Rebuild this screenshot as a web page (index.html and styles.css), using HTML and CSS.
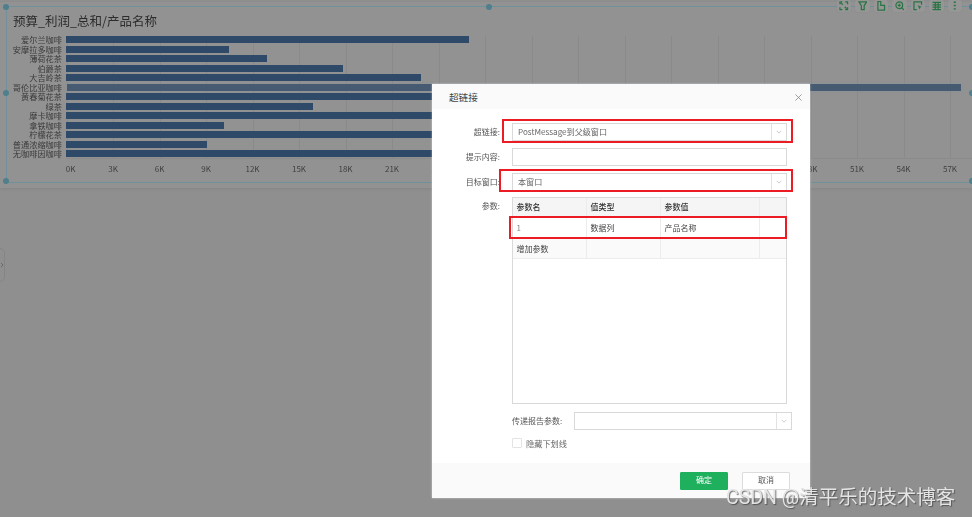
FILE: index.html
```html
<!DOCTYPE html>
<html lang="zh">
<head>
<meta charset="utf-8">
<title>超链接</title>
<link rel="stylesheet" href="styles.css">
</head>
<body>
<main class="canvas">
  <section class="chart">
    <span class="handle h-tl"></span><span class="handle h-tc"></span><span class="handle h-tr"></span>
    <span class="handle h-ml"></span><span class="handle h-mr"></span>
    <span class="handle h-bl"></span><span class="handle h-bc"></span><span class="handle h-br"></span>
    <div class="toolbar">
      <span class="tool"><svg viewBox="0 0 10 10"><path d="M1 3.500V1h2.500M6.500 1H9v2.500M1 6.500V9h2.500M9 6.500V9H6.500M2 2l2 2M8 8 6 6"/></svg></span>
      <span class="tool"><svg viewBox="0 0 10 10"><path d="M1 1h8L6.500 5v4h-3V5z"/></svg></span>
      <span class="tool"><svg viewBox="0 0 10 10"><path d="M2 .5h3v4h4v5H2z"/></svg></span>
      <span class="tool"><svg viewBox="0 0 10 10"><circle cx="4.500" cy="4.500" r="3.500"/><path d="M7 7l2.500 2.500M3 4.500h3M4.500 3v3"/></svg></span>
      <span class="tool"><svg viewBox="0 0 10 10"><path d="M9 4V1H1v8h3"/><path class="solid" d="M5 4.500l4 1.500-1.500 1L7 9z"/></svg></span>
      <span class="tool"><svg viewBox="0 0 10 10"><path d="M0.500 1.500h9M0.500 4h9M0.500 6.500h9M0.500 9h9M3.500 1v8M6.500 1v8"/></svg></span>
      <span class="tool"><svg viewBox="0 0 10 10"><path class="dots" d="M5 .5v1.500M5 4v1.500M5 7.500V9"/></svg></span>
    </div>
    <h1 class="chart-title">预算_利润_总和/产品名称</h1>
    <div class="plot">
      <div class="grid-lines">
        <i></i><i></i><i></i><i></i><i></i><i></i><i></i><i></i><i></i><i></i>
        <i></i><i></i><i></i><i></i><i></i><i></i><i></i><i></i><i></i><i></i>
      </div>
      <div class="rows">
        <div class="row"><span class="cat">爱尔兰咖啡</span><span class="bar" style="width:403px"></span></div>
        <div class="row"><span class="cat">安摩拉多咖啡</span><span class="bar" style="width:163px"></span></div>
        <div class="row"><span class="cat">薄荷花茶</span><span class="bar" style="width:201px"></span></div>
        <div class="row"><span class="cat">伯爵茶</span><span class="bar" style="width:277px"></span></div>
        <div class="row"><span class="cat">大吉岭茶</span><span class="bar" style="width:355px"></span></div>
        <div class="row"><span class="cat">哥伦比亚咖啡</span><span class="bar bar-hl" style="width:894px"></span></div>
        <div class="row"><span class="cat">黄春菊花茶</span><span class="bar" style="width:520px"></span></div>
        <div class="row"><span class="cat">绿茶</span><span class="bar" style="width:247px"></span></div>
        <div class="row"><span class="cat">摩卡咖啡</span><span class="bar" style="width:500px"></span></div>
        <div class="row"><span class="cat">拿铁咖啡</span><span class="bar" style="width:158px"></span></div>
        <div class="row"><span class="cat">柠檬花茶</span><span class="bar" style="width:480px"></span></div>
        <div class="row"><span class="cat">普通浓缩咖啡</span><span class="bar" style="width:141px"></span></div>
        <div class="row"><span class="cat">无咖啡因咖啡</span><span class="bar" style="width:560px"></span></div>
      </div>
      <div class="axis">
        <span class="first">0K</span><span>3K</span><span>6K</span><span>9K</span><span>12K</span><span>15K</span><span>18K</span><span>21K</span><span>24K</span><span>27K</span><span>30K</span><span>33K</span><span>36K</span><span>39K</span><span>42K</span><span>45K</span><span>48K</span><span>51K</span><span>54K</span><span>57K</span>
      </div>
    </div>
  </section>
  <button class="side-tab" type="button" aria-label="展开">
    <svg viewBox="0 0 6 8"><path d="M1.500 1l3 3-3 3"/></svg>
  </button>
  <div class="modal" role="dialog">
    <header class="modal-head">
      <h2>超链接</h2>
      <svg class="close" viewBox="0 0 8 8"><path d="M.5.5l7 7M7.500.500l-7 7"/></svg>
    </header>
    <div class="modal-body">
      <div class="field">
        <label>超链接:</label>
        <div class="select"><span class="value">PostMessage到父级窗口</span><span class="arrow"><svg viewBox="0 0 8 5"><path d="M1 1l3 3 3-3"/></svg></span></div>
      </div>
      <div class="field">
        <label>提示内容:</label>
        <div class="input"></div>
      </div>
      <div class="field field-target">
        <label>目标窗口:</label>
        <div class="select"><span class="value">本窗口</span><span class="arrow"><svg viewBox="0 0 8 5"><path d="M1 1l3 3 3-3"/></svg></span></div>
      </div>
      <div class="field field-table">
        <label>参数:</label>
        <div class="table">
          <div class="t-row t-head"><span>参数名</span><span>值类型</span><span>参数值</span><span></span></div>
          <div class="t-row t-data"><span class="muted">1</span><span>数据列</span><span>产品名称</span><span></span></div>
          <div class="t-row t-add"><span>增加参数</span><span></span><span></span><span></span></div>
        </div>
      </div>
      <div class="pass">
        <label>传递报告参数:</label>
        <div class="select"><span class="value"></span><span class="arrow"><svg viewBox="0 0 8 5"><path d="M1 1l3 3 3-3"/></svg></span></div>
      </div>
      <div class="check"><span class="box"></span><span>隐藏下划线</span></div>
    </div>
    <footer class="modal-foot">
      <button class="btn btn-ok" type="button">确定</button>
      <button class="btn" type="button">取消</button>
    </footer>
    <span class="mark m1"></span><span class="mark m2"></span><span class="mark m3"></span>
  </div>
  <div class="watermark">CSDN @清平乐的技术博客</div>
</main>
</body>
</html>
```

FILE: styles.css
```css
* { box-sizing: border-box; }
html, body { margin: 0; height: 100%; }
body {
  width: 972px; height: 517px; overflow: hidden;
  background: #8f8f8f;
  font-family: "Noto Sans CJK SC", "Noto Sans", sans-serif;
  color: #333;
}
.canvas { position: relative; width: 972px; height: 517px; overflow: hidden; padding-top: 2px; background: #8f8f8f; }

.chart {
  position: relative;
  height: 186px;
  background: #929292;
  box-shadow: 0 1px 3px rgba(0,0,0,.08);
  padding: 5px 0 0 6px;
  filter: blur(.35px);
}
.chart::before {
  content: ""; position: absolute; left: 6px; right: 0; top: 4px; height: 175px;
  border: 1px solid #70909a; border-right: 0;
}
.handle { position: absolute; width: 6px; height: 6px; border-radius: 50%; background: #4f7f8c; }
.h-tl { left: 3px; top: 2px; } .h-tc { left: 486px; top: 2px; } .h-tr { left: 969px; top: 2px; }
.h-ml { left: 3px; top: 88px; } .h-mr { left: 969px; top: 88px; }
.h-bl { left: 3px; top: 176px; } .h-bc { left: 486px; top: 176px; } .h-br { left: 969px; top: 176px; }

.toolbar { position: absolute; right: 10px; top: -2px; display: flex; gap: 4px; }
.tool { width: 14.500px; height: 12px; background: #969696; border-radius: 2px; display: flex; align-items: center; justify-content: center; box-shadow: 0 0 1px rgba(0,0,0,.12); }
.tool svg { width: 9.500px; height: 9.500px; fill: none; stroke: #2a7444; stroke-width: 1.300; }
.tool .solid { fill: #2a7444; stroke: none; }
.tool .dots { stroke-width: 2.200; }

.chart-title { margin: 0 0 0 7px; font-size: 12.500px; line-height: 18px; padding-top: 5px; height: 27px; font-weight: 400; color: #2c2c2c; }

.plot { position: relative; }
.grid-lines { position: absolute; left: 60.500px; top: 2px; width: 912px; height: 123px; display: flex; overflow: hidden; border-bottom: 1px solid #8b8b8b; }
.grid-lines i { width: 46.500px; flex: none; border-left: 1px solid #8a8a8a; }
.rows { position: relative; display: flex; flex-direction: column; padding-top: 1px; }
.row { display: flex; align-items: center; height: 9.500px; }
.cat { width: 56px; flex: none; text-align: right; font-family: "Liberation Sans", "Noto Sans CJK SC", sans-serif; font-size: 8.200px; line-height: 9.500px; color: #3a3a3a; white-space: nowrap; position: relative; top: 1px; }
.bar { height: 7px; margin-left: 4px; background: #2f4a68; flex: none; }
.bar-hl { background: #465b72; box-shadow: 0 0 2px 1px rgba(135,148,158,.45); margin-left: 5px; }
.axis { position: relative; display: flex; height: 14px; padding-left: 37.250px; margin-top: 3px; }
.axis span { width: 46.500px; flex: none; text-align: center; font-size: 8px; line-height: 14px; color: #3e3e3e; }
.axis .first { position: relative; left: 4px; }

.side-tab { position: absolute; left: -5px; top: 248px; width: 9.500px; height: 34px; padding: 0; background: #8f8f8f; border: 1px solid #858585; border-radius: 0 5px 5px 0; display: flex; align-items: center; justify-content: flex-end; filter: blur(.3px); }
.side-tab svg { width: 4px; height: 6px; fill: none; stroke: #555; stroke-width: 1; }

.modal {
  position: absolute; left: 432px; top: 84px; width: 378px; height: 414px;
  background: #fff; display: flex; flex-direction: column;
  box-shadow: 0 0 2px rgba(255,255,255,.55);
  filter: blur(.35px);
}
.modal-head { height: 25px; flex: none; background: #fafafa; display: flex; align-items: center; justify-content: space-between; padding: 1px 8px 0 17px; }
.modal-head h2 { margin: 0; font-size: 9.600px; font-weight: 400; color: #444; line-height: 24px; }
.close { width: 7px; height: 7px; fill: none; stroke: #777; stroke-width: .8; }
.modal-body { flex: 1; padding: 14px 23px 0 0; display: flex; flex-direction: column; }
.field { display: flex; height: 18px; margin-bottom: 7px; }
.field-target { margin-bottom: 6px; }
.field label { width: 68px; flex: none; text-align: right; font-size: 8px; line-height: 18px; color: #555; white-space: nowrap; }
.select, .input { margin-left: 12px; flex: 1; height: 18px; border: 1px solid #d9d9d9; background: #fff; display: flex; }
.value { flex: 1; padding-left: 5px; font-size: 8.100px; line-height: 16px; color: #666; white-space: nowrap; }
.arrow { width: 15px; flex: none; border-left: 1px solid #e2e2e2; display: flex; align-items: center; justify-content: center; }
.arrow svg { width: 6px; height: 4px; fill: none; stroke: #aaa; stroke-width: .8; }

.field-table { height: 207px; margin-bottom: 8px; }
.table { margin-left: 12px; flex: 1; border: 1px solid #d9d9d9; background: #fff; }
.t-row { display: grid; grid-template-columns: 74px 74px 99px 1fr; font-size: 8px; color: #444; }
.t-row span { padding-left: 3.500px; border-right: 1px solid #ececec; white-space: nowrap; }
.t-row span:last-child { border-right: 0; }
.t-head { height: 19px; line-height: 17px; background: #f5f5f5; font-weight: 500; color: #333; }
.t-data { height: 22px; line-height: 22px; }
.t-add { height: 20px; line-height: 20px; background: #fafafa; border-bottom: 1px solid #ececec; }
.muted { color: #888; }

.pass { display: flex; height: 18px; padding-left: 80px; margin-right: -5px; }
.pass label { width: 62px; flex: none; font-size: 8px; line-height: 18px; color: #555; white-space: nowrap; }
.pass .select { margin-left: 0; }
.check { display: flex; align-items: center; gap: 4px; margin: 7px 0 0 80px; height: 11px; font-size: 8.200px; line-height: 10px; color: #666; }
.box { width: 10px; height: 10px; border: 1px solid #e3e3e3; border-radius: 1px; }

.modal-foot { height: 35px; flex: none; background: #fafafa; display: flex; justify-content: flex-end; gap: 14px; padding: 9px 20px 0 0; }
.btn { width: 48px; height: 18px; padding: 0; font-family: "Liberation Sans", "Noto Sans CJK SC", sans-serif; font-size: 8px; line-height: 16px; color: #555; background: #fff; border: 1px solid #dcdcdc; border-radius: 1px; }
.btn-ok { background: #1eb05d; border-color: #1eb05d; color: #fff; }

.mark { position: absolute; border: 2px solid #ec1c24; }
.m1 { left: 70px; top: 35px; width: 291px; height: 24px; }
.m2 { left: 67px; top: 85px; width: 294px; height: 23px; }
.m3 { left: 77px; top: 132px; width: 278px; height: 23px; }

.watermark {
  position: absolute; left: 726px; top: 486px;
  font-family: Roboto, "Noto Sans CJK SC", sans-serif;
  font-size: 19.500px; line-height: 23px; white-space: nowrap;
  color: #e4e4e4; text-shadow: 1px 1px 1px rgba(60,60,60,.7);
}
```
